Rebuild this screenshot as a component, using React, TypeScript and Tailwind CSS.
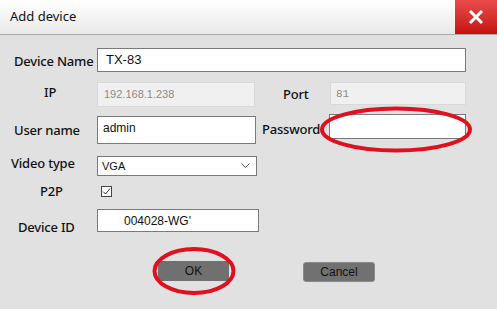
import React from "react";

const labelCls = "text-[13px] text-[#111] font-medium leading-none tracking-[-0.2px]";

export default function App() {
  return (
    <div
      className="relative w-[497px] h-[309px] bg-[#e1e1e1] overflow-hidden"
      style={{ fontFamily: '"Noto Sans", "Open Sans", sans-serif' }}
    >
      {/* Title bar */}
      <div className="flex h-[35px] border-b border-[#a9a9a9] bg-gradient-to-b from-white to-[#e9e9e9]">
        <div className="flex-1 flex items-center pl-[10px] text-[13px] text-[#111]">Add device</div>
        <div className="w-[42px] h-[34px] bg-gradient-to-b from-[#e84a4a] to-[#c40d0d] flex items-center justify-center">
          <svg width="16" height="16" viewBox="0 0 16 16">
            <path d="M2 2 L14 14 M14 2 L2 14" stroke="white" strokeWidth="3" strokeLinecap="butt" />
          </svg>
        </div>
      </div>

      {/* Body */}
      <div className="flex flex-col">
        {/* Row 1 */}
        <div className="flex items-center mt-[13px] h-[24px]">
          <div className={`w-[97px] pl-[14px] pt-[2px] ${labelCls}`}>Device Name</div>
          <div className="w-[369px] h-[24px] bg-white border border-[#7a7a7a] flex items-center pl-[8px] text-[13px] text-[#111]" style={{ fontFamily: '"Liberation Sans", sans-serif' }}>
            TX-83
          </div>
        </div>

        {/* Row 2 */}
        <div className="flex items-start mt-[10px] h-[25px]">
          <div className={`w-[97px] pl-[44px] pt-[4px] ${labelCls}`}>IP</div>
          <div className="w-[158px] h-[25px] bg-[#f0f0f0] border border-[#d9d9d9] flex items-center pl-[6px] text-[11px] text-[#8a8a8a]" style={{ fontFamily: '"Liberation Sans", sans-serif' }}>
            192.168.1.238
          </div>
          <div className={`w-[75px] pl-[28px] pt-[6px] ${labelCls}`}>Port</div>
          <div className="w-[136px] h-[23px] bg-[#f0f0f0] border border-[#d9d9d9] flex items-start pt-[3px] pl-[5px] text-[11px] text-[#8a8a8a]" style={{ fontFamily: '"Liberation Mono", monospace' }}>
            81
          </div>
        </div>

        {/* Row 3 */}
        <div className="flex items-start mt-[9px] h-[28px]">
          <div className={`w-[97px] pl-[14px] pt-[8px] ${labelCls}`}>User name</div>
          <div className="w-[159px] h-[28px] bg-white border border-[#7a7a7a] pl-[5px] pt-[2px] text-[12px] text-[#111]" style={{ fontFamily: '"Liberation Sans", sans-serif' }}>
            admin
          </div>
          <div className={`w-[73px] pl-[6px] pt-[7px] ${labelCls}`}>Password</div>
          <div className="w-[137px] h-[25px] -mt-[2px] bg-white border border-[#7a7a7a]" />
        </div>

        {/* Row 4 */}
        <div className="flex items-start mt-[12px] h-[20px]">
          <div className={`w-[97px] pl-[11px] pt-[1px] ${labelCls}`}>Video type</div>
          <div className="w-[160px] h-[20px] bg-white border border-[#7a7a7a] flex items-center justify-between pl-[4px] pr-[6px] text-[11px] text-[#111]" style={{ fontFamily: '"Liberation Sans", sans-serif' }}>
            <span>VGA</span>
            <svg width="9" height="6" viewBox="0 0 9 6">
              <path d="M0.5 0.5 L4.5 4.5 L8.5 0.5" stroke="#555" strokeWidth="1" fill="none" />
            </svg>
          </div>
        </div>

        {/* Row 5 */}
        <div className="flex items-center mt-[10px] h-[10px]">
          <div className={`w-[101px] pl-[40px] ${labelCls}`}>P2P</div>
          <div className="w-[11px] h-[11px] bg-white border border-[#444] flex items-center justify-center">
            <svg width="9" height="9" viewBox="0 0 9 9">
              <path d="M1 4.5 L3.5 7 L8 1.5" stroke="#333" strokeWidth="1" fill="none" />
            </svg>
          </div>
        </div>

        {/* Row 6 */}
        <div className="flex items-start mt-[13px] h-[23px]">
          <div className={`w-[97px] pl-[18px] pt-[12px] ${labelCls}`}>Device ID</div>
          <div className="w-[162px] h-[23px] bg-white border border-[#7a7a7a] flex items-center pl-[26px] text-[12px] text-[#111]" style={{ fontFamily: '"Liberation Sans", sans-serif' }}>
            004028-WG'
          </div>
        </div>

        {/* Buttons */}
        <div className="flex items-start mt-[29px]">
          <div className="ml-[158px] w-[71px] h-[20px] bg-[#707070] rounded-[2px] flex items-center justify-center text-[12px] text-[#111]" style={{ fontFamily: '"Liberation Sans", sans-serif' }}>
            OK
          </div>
          <div className="ml-[74px] mt-[1px] w-[72px] h-[20px] bg-[#717171] rounded-[3px] border border-[#8a8a8a] flex items-center justify-center text-[12px] text-[#111]" style={{ fontFamily: '"Liberation Sans", sans-serif' }}>
            Cancel
          </div>
        </div>
      </div>

      {/* Red annotation ellipses */}
      <svg className="absolute left-0 top-0 pointer-events-none" width="497" height="309">
        <ellipse cx="396" cy="129.5" rx="74" ry="21" fill="none" stroke="#e0101f" strokeWidth="4" />
        <ellipse cx="194" cy="271" rx="39.5" ry="22" fill="none" stroke="#e0101f" strokeWidth="4" />
      </svg>
    </div>
  );
}
